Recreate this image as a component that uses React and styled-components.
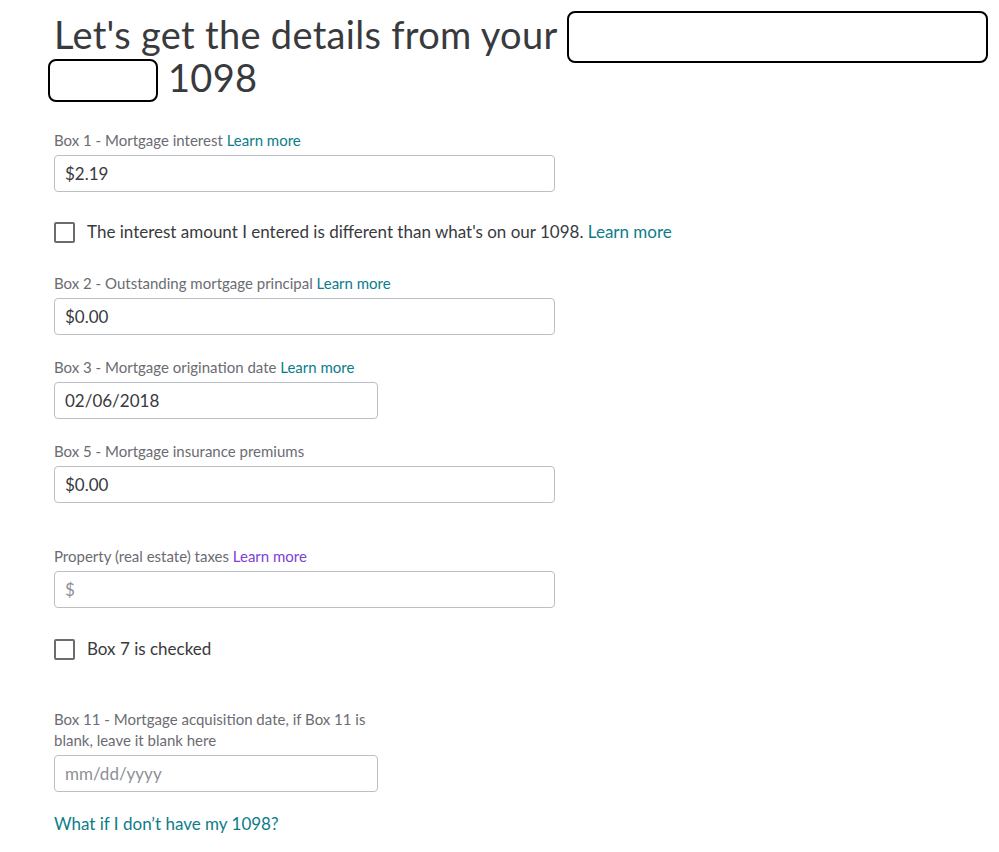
import React from 'react';
import styled, { createGlobalStyle } from 'styled-components';

const GlobalStyle = createGlobalStyle`
  html, body {
    margin: 0;
    padding: 0;
    background: #ffffff;
  }
  body {
    font-family: Lato, "Noto Sans", "Liberation Sans", sans-serif;
    color: #393a3d;
  }
`;

const Page = styled.main`
  padding: 14px 0 0 54px;
  width: 945px;
`;

const Title = styled.h1`
  margin: 0;
  font-size: 38px;
  font-weight: 400;
  line-height: 41px;
  color: #393a3d;
  letter-spacing: 0.3px;
`;

// black rounded outline that hides the redacted words
const Redaction = styled.span`
  display: inline-block;
  vertical-align: middle;
  box-sizing: border-box;
  width: ${p => p.w}px;
  height: ${p => p.h}px;
  margin: -10px 0 -6px ${p => p.shift || 0}px;
  border: 2.5px solid #000;
  border-radius: 8px;
`;

const Form = styled.div`
  display: flex;
  flex-direction: column;
`;

const Field = styled.div`
  display: flex;
  flex-direction: column;
  margin-top: ${p => p.top}px;
`;

const Label = styled.label`
  font-size: 15px;
  line-height: 21px;
  color: #6b6c72;
  margin-bottom: 4px;
  max-width: ${p => (p.narrow ? '330px' : 'none')};
`;

const Link = styled.a`
  color: ${p => (p.visited ? '#7e40d6' : '#0b7c8a')};
  text-decoration: none;
  cursor: pointer;
`;

const Input = styled.input`
  box-sizing: border-box;
  width: ${p => (p.short ? 324 : 501)}px;
  height: 37px;
  padding: 0 10px;
  border: 1px solid #babec5;
  border-radius: 4px;
  font-family: inherit;
  font-size: 17px;
  color: #393a3d;
  background: #fff;
  outline: none;

  &::placeholder {
    color: #8d9096;
  }
`;

const CheckRow = styled.label`
  display: flex;
  align-items: center;
  gap: 12px;
  margin-top: ${p => p.top}px;
  font-size: 17px;
  line-height: 22px;
  color: #393a3d;
  cursor: pointer;
`;

const Box = styled.span`
  box-sizing: border-box;
  width: 21px;
  height: 21px;
  border: 2px solid #6b6c72;
  border-radius: 2px;
  flex-shrink: 0;
`;

const BottomLink = styled(Link)`
  margin-top: 21px;
  font-size: 17px;
  line-height: 22px;
`;

export default function App() {
  return (
    <>
      <GlobalStyle />
      <Page>
        <Title>
          Let's get the details from your <Redaction w={421} h={52} />{' '}
          <Redaction w={110} h={43} shift={-6} /> 1098
        </Title>

        <Form>
          <Field top={32}>
            <Label>
              Box 1 - Mortgage interest <Link>Learn more</Link>
            </Label>
            <Input defaultValue="$2.19" />
          </Field>

          <CheckRow top={29}>
            <Box />
            <span>
              The interest amount I entered is different than what's on our 1098.{' '}
              <Link>Learn more</Link>
            </span>
          </CheckRow>

          <Field top={30}>
            <Label>
              Box 2 - Outstanding mortgage principal <Link>Learn more</Link>
            </Label>
            <Input defaultValue="$0.00" />
          </Field>

          <Field top={22}>
            <Label>
              Box 3 - Mortgage origination date <Link>Learn more</Link>
            </Label>
            <Input short defaultValue="02/06/2018" />
          </Field>

          <Field top={22}>
            <Label>Box 5 - Mortgage insurance premiums</Label>
            <Input defaultValue="$0.00" />
          </Field>

          <Field top={43}>
            <Label>
              Property (real estate) taxes <Link visited>Learn more</Link>
            </Label>
            <Input placeholder="$" />
          </Field>

          <CheckRow top={30}>
            <Box />
            <span>Box 7 is checked</span>
          </CheckRow>

          <Field top={49}>
            <Label narrow>
              Box 11 - Mortgage acquisition date, if Box 11 is blank, leave it blank here
            </Label>
            <Input short placeholder="mm/dd/yyyy" />
          </Field>

          <BottomLink>What if I don’t have my 1098?</BottomLink>
        </Form>
      </Page>
    </>
  );
}
